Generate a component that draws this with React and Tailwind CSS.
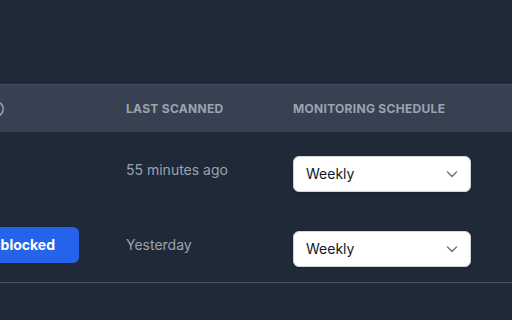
import React from 'react';

const ROWS = [
  { id: 1, status: null, lastScanned: '55 minutes ago', schedule: 'Weekly' },
  { id: 2, status: 'Unblocked', lastScanned: 'Yesterday', schedule: 'Weekly' },
];

function InfoCircle() {
  return (
    <svg width="16" height="16" viewBox="0 0 16 16" fill="none" className="text-[#9ca3af]">
      <circle cx="8" cy="8" r="7.25" stroke="currentColor" strokeWidth="1.5" />
    </svg>
  );
}

function Chevron() {
  return (
    <svg width="12" height="12" viewBox="0 0 12 12" fill="none" className="text-[#6b7280]">
      <path d="M1.5 4l4.5 4.5L10.5 4" stroke="currentColor" strokeWidth="1.4" strokeLinecap="round" strokeLinejoin="round" />
    </svg>
  );
}

function ScheduleSelect({ value }) {
  return (
    <div className="mt-2 flex h-9 w-[178px] items-center justify-between rounded-md border border-[#d1d5db] bg-white pl-3 pr-3 text-sm text-[#111827] shadow-sm">
      <span>{value}</span>
      <Chevron />
    </div>
  );
}

function Row({ row }) {
  return (
    <div className="flex h-[75px] items-center">
      <div className="flex w-[402px] shrink-0 justify-end pr-[23px]">
        {row.status && (
          <button
            type="button"
            className="h-9 rounded-md bg-[#2563eb] px-6 text-sm font-bold text-white"
          >
            {row.status}
          </button>
        )}
      </div>
      <div className="w-[167px] shrink-0 px-6 text-sm text-[#9ca3af]">{row.lastScanned}</div>
      <div className="w-[226px] shrink-0 px-6">
        <ScheduleSelect value={row.schedule} />
      </div>
    </div>
  );
}

export default function App() {
  return (
    <div className="h-[320px] w-[512px] overflow-hidden bg-[#1f2937] pt-[84px] font-['Inter',sans-serif]">
      <div className="ml-[-300px] w-[840px]">
        <div className="flex h-12 items-center border-t border-[#414d5f] bg-[#374151] text-xs font-bold uppercase tracking-wide text-[#9ca3af]">
          <div className="flex w-[402px] shrink-0 justify-end pr-[98px]">
            <InfoCircle />
          </div>
          <div className="w-[167px] shrink-0 px-6">Last scanned</div>
          <div className="w-[226px] shrink-0 px-6">Monitoring schedule</div>
        </div>
        <div className="border-b border-[#4b5563]">
          {ROWS.map((row) => (
            <Row key={row.id} row={row} />
          ))}
        </div>
      </div>
    </div>
  );
}
